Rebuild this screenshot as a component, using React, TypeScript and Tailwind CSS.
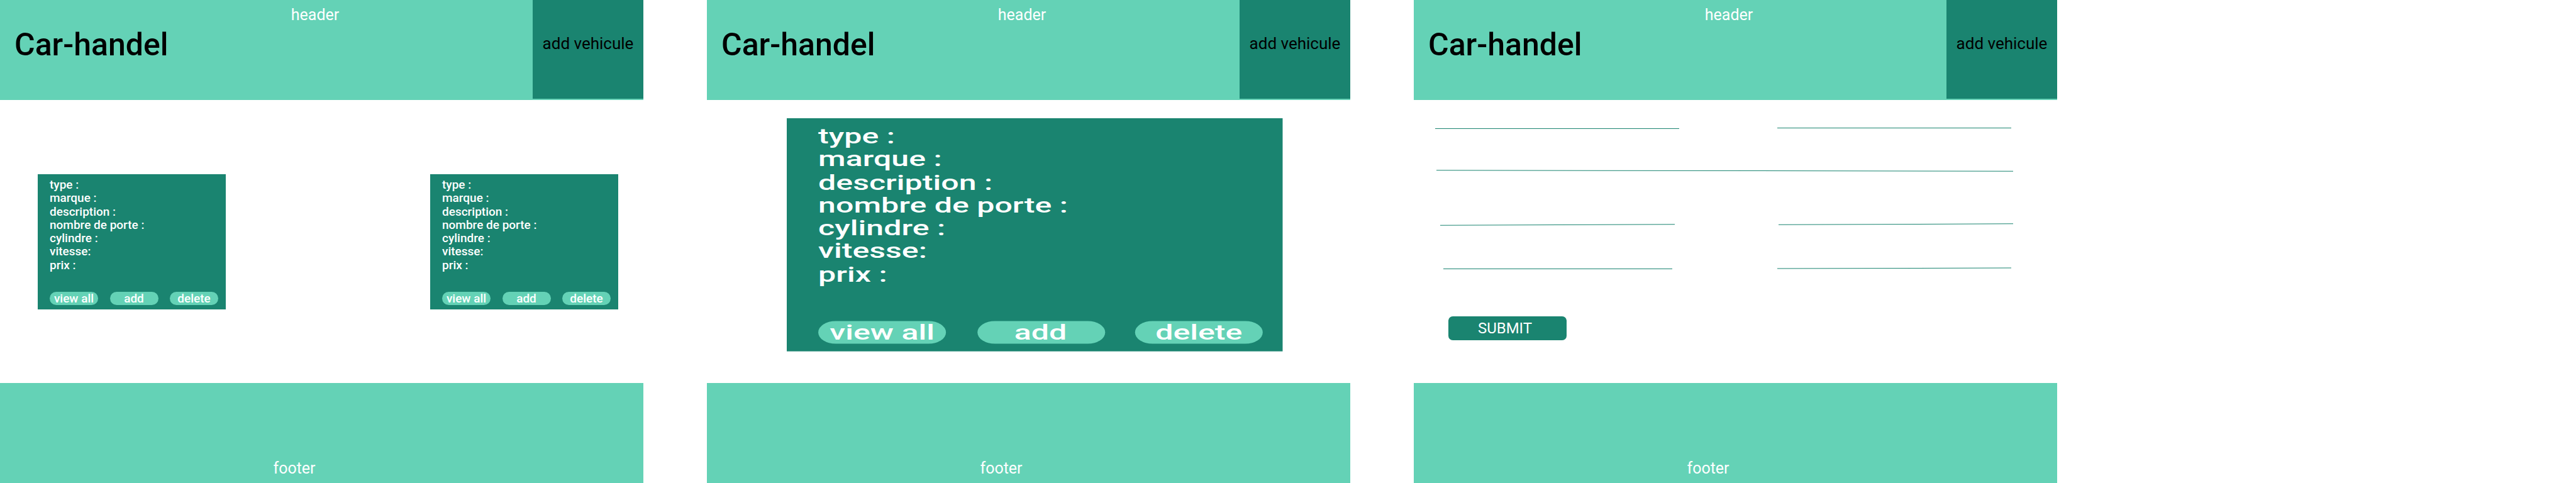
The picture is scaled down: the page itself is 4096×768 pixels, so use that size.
import React from 'react';

const labels = ['type :', 'marque :', 'description :', 'nombre de porte :', 'cylindre :', 'vitesse:', 'prix :'];

function Header() {
  return (
    <header className="flex h-[159px] bg-[#64d2b6]">
      <div className="flex w-[847px] flex-col">
        <div className="pt-[9px] pl-[155px] text-center text-[25px] leading-[29px] text-white">header</div>
        <div className="mt-[3px] pl-[23px] text-[50px] leading-[60px] font-medium text-black">Car-handel</div>
      </div>
      <div className="flex h-[157px] w-[176px] justify-center bg-[#1a8470] pt-[54px] text-[26px] leading-[30px] text-black">
        add vehicule
      </div>
    </header>
  );
}

function Footer() {
  return (
    <footer className="h-[159px] bg-[#64d2b6] pt-[121px] pr-[87px] text-center text-[25px] leading-[29px] text-white">
      footer
    </footer>
  );
}

function Card() {
  return (
    <div className="flex h-[215px] w-[299px] flex-col bg-[#1a8470] pt-[6px] pb-[7px] pl-[19px] font-medium text-white">
      <div className="text-[19px] leading-[21.3px]">
        {labels.map((l) => (
          <div key={l}>{l}</div>
        ))}
      </div>
      <div className="mt-auto flex gap-[18.5px]">
        {['view all', 'add', 'delete'].map((b) => (
          <button
            key={b}
            className="h-[21px] w-[77px] rounded-full bg-[#64d2b6] text-center text-[19px] leading-[21px] font-medium text-white"
          >
            {b}
          </button>
        ))}
      </div>
    </div>
  );
}

function Panel({ children }: { children: React.ReactNode }) {
  return (
    <div className="flex w-[1023px] shrink-0 flex-col">
      <Header />
      <main className="h-[450px]">{children}</main>
      <Footer />
    </div>
  );
}

export default function App() {
  return (
    <div className="flex min-h-[768px] gap-[101px] bg-white font-['Roboto','Noto_Sans',sans-serif]">
      <Panel>
        <div className="flex gap-[325px] pt-[118px] pl-[60px]">
          <Card />
          <Card />
        </div>
      </Panel>
      <Panel>
        <div className="pt-[29px] pl-[127px]">
          <div className="h-[371px] w-[789px]">
            <div className="origin-top-left scale-x-[2.637] scale-y-[1.724]">
              <Card />
            </div>
          </div>
        </div>
      </Panel>
      <Panel>
        <div className="flex flex-col pt-[44px]">
          <div className="flex items-start">
            <div className="ml-[34px] mt-[1px] h-px w-[388px] bg-[#1a8470]" />
            <div className="ml-[156px] h-px w-[372px] bg-[#1a8470]" />
          </div>
          <div className="ml-[36px] mt-[66px] h-px w-[917px] rotate-[0.08deg] bg-[#1a8470]" />
          <div className="mt-[84px] flex items-start">
            <div className="ml-[42px] mt-[1px] h-px w-[373px] rotate-[-0.2deg] bg-[#1a8470]" />
            <div className="ml-[165px] h-px w-[373px] rotate-[-0.2deg] bg-[#1a8470]" />
          </div>
          <div className="mt-[68px] flex items-start">
            <div className="ml-[47px] mt-[1px] h-px w-[364px] bg-[#1a8470]" />
            <div className="ml-[167px] h-px w-[372px] rotate-[-0.15deg] bg-[#1a8470]" />
          </div>
          <div className="mt-[75px] pl-[55px]">
            <button className="h-[38px] w-[188px] rounded-[7px] bg-[#1a8470] pr-[8px] text-center text-[24px] leading-[38px] text-white">
              SUBMIT
            </button>
          </div>
        </div>
      </Panel>
    </div>
  );
}
